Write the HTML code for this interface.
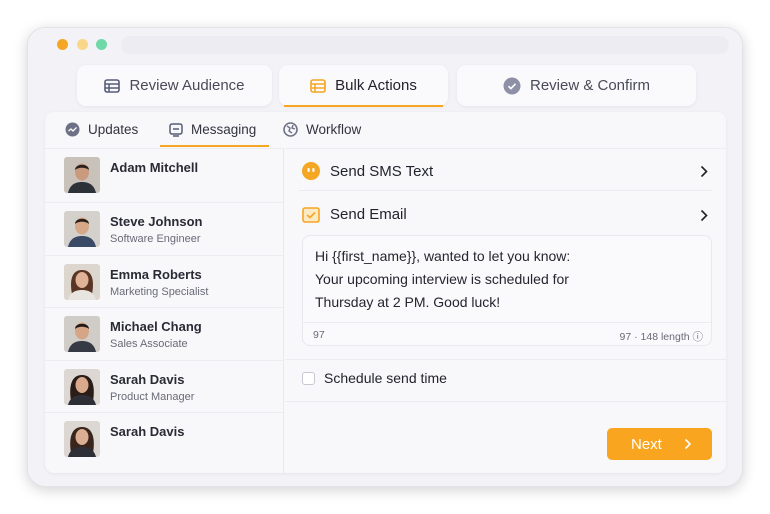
<!DOCTYPE html><html><head><style>
*{box-sizing:border-box;margin:0;padding:0}
body{width:770px;height:514px;background:#fff;font-family:"Liberation Sans",sans-serif;position:relative;overflow:hidden;color:#23232e}
.win{position:absolute;left:27px;top:27px;width:716px;height:460px;border-radius:18px;background:#f2f2f7;box-shadow:0 3px 14px rgba(0,0,0,.18);border:1px solid #e2e2e8}
.dot{position:absolute;top:11px;width:11px;height:11px;border-radius:50%}
.url{position:absolute;left:93px;top:8px;width:608px;height:18px;border-radius:9px;background:#ececf2}
.tab{position:absolute;top:37px;height:41px;background:#fafafd;border-radius:9px;box-shadow:0 1px 3px rgba(0,0,0,.06);font-size:15px;color:#4a4a58;display:flex;align-items:center;justify-content:center;gap:9px}
.panel{position:absolute;left:17px;top:84px;width:681px;height:361px;background:#f8f8fb;border-radius:9px;box-shadow:0 1px 3px rgba(0,0,0,.06)}
.sub{position:absolute;top:10px;font-size:13.5px;color:#33333f;display:flex;align-items:center;gap:8px}
.left{position:absolute;left:0;top:36px;width:239px;height:325px;border-right:1px solid #e8e8ee;border-top:1px solid #ececf1}
.row{height:52.5px;border-bottom:1px solid #ececf1;display:flex;align-items:flex-start;padding:8px 0 0 19px;gap:10px}
.nm{font-size:13px;font-weight:bold;color:#2a2a35;margin-top:3px}
.rl{font-size:11px;color:#6a6a78;margin-top:4px}
.right{position:absolute;left:240px;top:36px;width:441px;height:325px;border-top:1px solid #ececf1}
.ln{position:absolute;left:0;right:0;height:1px;background:#ebebf0}
</style></head><body>
<div class="win">
<div class="dot" style="left:29px;background:#f5a623"></div>
<div class="dot" style="left:49px;background:#f8d78a"></div>
<div class="dot" style="left:68px;background:#6fd9a8"></div>
<div class="url"></div>
<div class="tab" style="left:49px;width:195px"><svg width="16" height="14"><rect x="1" y="1" width="14" height="12" rx="2" fill="none" stroke="#555d78" stroke-width="1.6"/><line x1="1" y1="5" x2="15" y2="5" stroke="#555d78" stroke-width="1.5"/><line x1="1" y1="9" x2="15" y2="9" stroke="#555d78" stroke-width="1.5"/><line x1="5" y1="5" x2="5" y2="13" stroke="#555d78" stroke-width="1.5"/></svg>Review Audience</div>
<div class="tab" style="left:251px;width:169px;color:#22222c"><svg width="16" height="14"><rect x="1" y="1" width="14" height="12" rx="2" fill="none" stroke="#f5a623" stroke-width="1.6"/><line x1="1" y1="5" x2="15" y2="5" stroke="#f5a623" stroke-width="1.5"/><line x1="1" y1="9" x2="15" y2="9" stroke="#f5a623" stroke-width="1.5"/><line x1="5" y1="5" x2="5" y2="13" stroke="#f5a623" stroke-width="1.5"/></svg>Bulk Actions<div style="position:absolute;left:5px;right:5px;bottom:-1px;height:2px;background:#f5a623"></div></div>
<div class="tab" style="left:429px;width:239px"><svg width="18" height="18"><circle cx="9" cy="9" r="8.5" fill="#8e91a6"/><path d="M5.5 9.2l2.4 2.4 4.6-4.8" stroke="#fff" stroke-width="1.6" fill="none"/></svg>Review &amp; Confirm</div>
<div class="panel">
<div class="sub" style="left:20px"><svg width="15" height="15"><circle cx="7.5" cy="7.5" r="7" fill="#6e7186"/><path d="M3.5 9l2.5-2 2 2 3.5-3.5" stroke="#fff" stroke-width="1.3" fill="none"/></svg>Updates</div>
<div class="sub" style="left:124px"><svg width="14" height="14"><rect x="1" y="1" width="12" height="10" rx="2" fill="none" stroke="#555d78" stroke-width="1.5"/><path d="M4 6h6M4 13h6" stroke="#555d78" stroke-width="1.5"/></svg>Messaging</div>
<div style="position:absolute;left:115px;top:33px;width:109px;height:2px;background:#f5a623"></div>
<div class="sub" style="left:238px"><svg width="15" height="15"><circle cx="7.5" cy="7.5" r="6.5" fill="none" stroke="#6e7186" stroke-width="1.6"/><path d="M4 4l3 2-1 3 3 2M10 3l-1 3 3 1" stroke="#6e7186" stroke-width="1.4" fill="none"/></svg>Workflow</div>
<div class="left">
<div class="row" style="height:54px"><svg width="36" height="36" viewBox="0 0 36 36"><rect width="36" height="36" rx="3" fill="#c8c2bb"/><path d="M4 36c2-9 8-11 14-11s12 2 14 11z" fill="#2d3138"/><ellipse cx="18" cy="15" rx="7" ry="8.5" fill="#c99a7e"/><path d="M11 13c0-7 14-7 14 0-3-3-11-3-14 0z" fill="#2a211c"/></svg><div class="nm">Adam Mitchell</div></div>
<div class="row"><svg width="36" height="36" viewBox="0 0 36 36"><rect width="36" height="36" rx="3" fill="#d4d0cc"/><path d="M4 36c2-9 8-11 14-11s12 2 14 11z" fill="#3a4a66"/><ellipse cx="18" cy="15" rx="7" ry="8.5" fill="#d6a888"/><path d="M11 13c0-7 14-7 14 0-3-3-11-3-14 0z" fill="#2b211c"/></svg><div><div class="nm">Steve Johnson</div><div class="rl">Software Engineer</div></div></div>
<div class="row"><svg width="36" height="36" viewBox="0 0 36 36"><rect width="36" height="36" rx="3" fill="#ddd6cf"/><path d="M8 30c-2-10-2-24 10-24s12 14 10 24z" fill="#5a3524"/><path d="M4 36c2-8 8-10 14-10s12 2 14 10z" fill="#e8e4e0"/><ellipse cx="18" cy="16" rx="6.5" ry="8" fill="#e0b298"/></svg><div><div class="nm">Emma Roberts</div><div class="rl">Marketing Specialist</div></div></div>
<div class="row"><svg width="36" height="36" viewBox="0 0 36 36"><rect width="36" height="36" rx="3" fill="#d0ccc8"/><path d="M4 36c2-9 8-11 14-11s12 2 14 11z" fill="#363a44"/><ellipse cx="18" cy="15" rx="7" ry="8.5" fill="#d5a585"/><path d="M11 13c0-7 14-7 14 0-3-3-11-3-14 0z" fill="#1d1a18"/></svg><div><div class="nm">Michael Chang</div><div class="rl">Sales Associate</div></div></div>
<div class="row"><svg width="36" height="36" viewBox="0 0 36 36"><rect width="36" height="36" rx="3" fill="#dcd7d2"/><path d="M7 32c-2-12-1-26 11-26s13 14 11 26z" fill="#2a1d18"/><path d="M4 36c2-8 8-10 14-10s12 2 14 10z" fill="#2e2e36"/><ellipse cx="18" cy="16" rx="6.5" ry="8" fill="#d9a98c"/></svg><div><div class="nm">Sarah Davis</div><div class="rl">Product Manager</div></div></div>
<div class="row" style="border:0"><svg width="36" height="36" viewBox="0 0 36 36"><rect width="36" height="36" rx="3" fill="#dcd7d2"/><path d="M7 32c-2-12-1-26 11-26s13 14 11 26z" fill="#3a251c"/><path d="M4 36c2-8 8-10 14-10s12 2 14 10z" fill="#2e2e36"/><ellipse cx="18" cy="16" rx="6.5" ry="8" fill="#dcae92"/></svg><div class="nm">Sarah Davis</div></div>
</div>
<div class="right">
<div style="position:absolute;left:17px;top:13px;display:flex;align-items:center;gap:10px;font-size:15px"><svg width="18" height="18"><circle cx="9" cy="9" r="9" fill="#f5a623"/><rect x="5.5" y="6" width="2.2" height="4" rx="1" fill="#fff"/><rect x="10.3" y="6" width="2.2" height="4" rx="1" fill="#fff"/></svg>Send SMS Text</div>
<svg style="position:absolute;right:18px;top:16px" width="8" height="13"><path d="M1.5 1.5l5 5-5 5" stroke="#222" stroke-width="1.6" fill="none"/></svg>
<div class="ln" style="top:41px;left:14px;right:14px"></div>
<div style="position:absolute;left:17px;top:57px;display:flex;align-items:center;gap:10px;font-size:15px"><svg width="18" height="16"><rect x="1" y="1" width="16" height="14" rx="2" fill="#fde9c4" stroke="#f5a623" stroke-width="1.6"/><path d="M5 8l3 2.5 5-5" stroke="#f5a623" stroke-width="1.6" fill="none"/></svg>Send Email</div>
<svg style="position:absolute;right:18px;top:60px" width="8" height="13"><path d="M1.5 1.5l5 5-5 5" stroke="#222" stroke-width="1.6" fill="none"/></svg>
<div style="position:absolute;left:17px;top:86px;width:410px;height:111px;border:1px solid #e8e8ee;border-radius:8px;background:#fafafc">
<div style="padding:9px 12px 0;font-size:14px;line-height:23px;color:#25252f">Hi {{first_name}}, wanted to let you know:<br>Your upcoming interview is scheduled for<br>Thursday at 2 PM. Good luck!</div>
<div class="ln" style="top:86px"></div>
<div style="position:absolute;left:10px;top:93px;font-size:10.5px;color:#6a6a78">97</div>
<div style="position:absolute;right:8px;top:93px;font-size:10.5px;color:#6a6a78">97 · 148 length ⓘ</div>
</div>
<div class="ln" style="top:210px"></div>
<div style="position:absolute;left:17px;top:221px;display:flex;align-items:center;gap:9px;font-size:14px"><span style="width:13px;height:13px;border:1.5px solid #c8c8d2;border-radius:3px;background:#fff"></span>Schedule send time</div>
<div class="ln" style="top:252px"></div>
<div style="position:absolute;left:322px;top:279px;width:105px;height:32px;background:#f9a51f;border-radius:5px;color:#fff;font-size:15px;display:flex;align-items:center;padding-left:24px;gap:22px">Next<svg width="8" height="12"><path d="M1.5 1.5l4.5 4.5-4.5 4.5" stroke="#fff" stroke-width="1.6" fill="none"/></svg></div>
</div>
</div>
</div>
</body></html>
